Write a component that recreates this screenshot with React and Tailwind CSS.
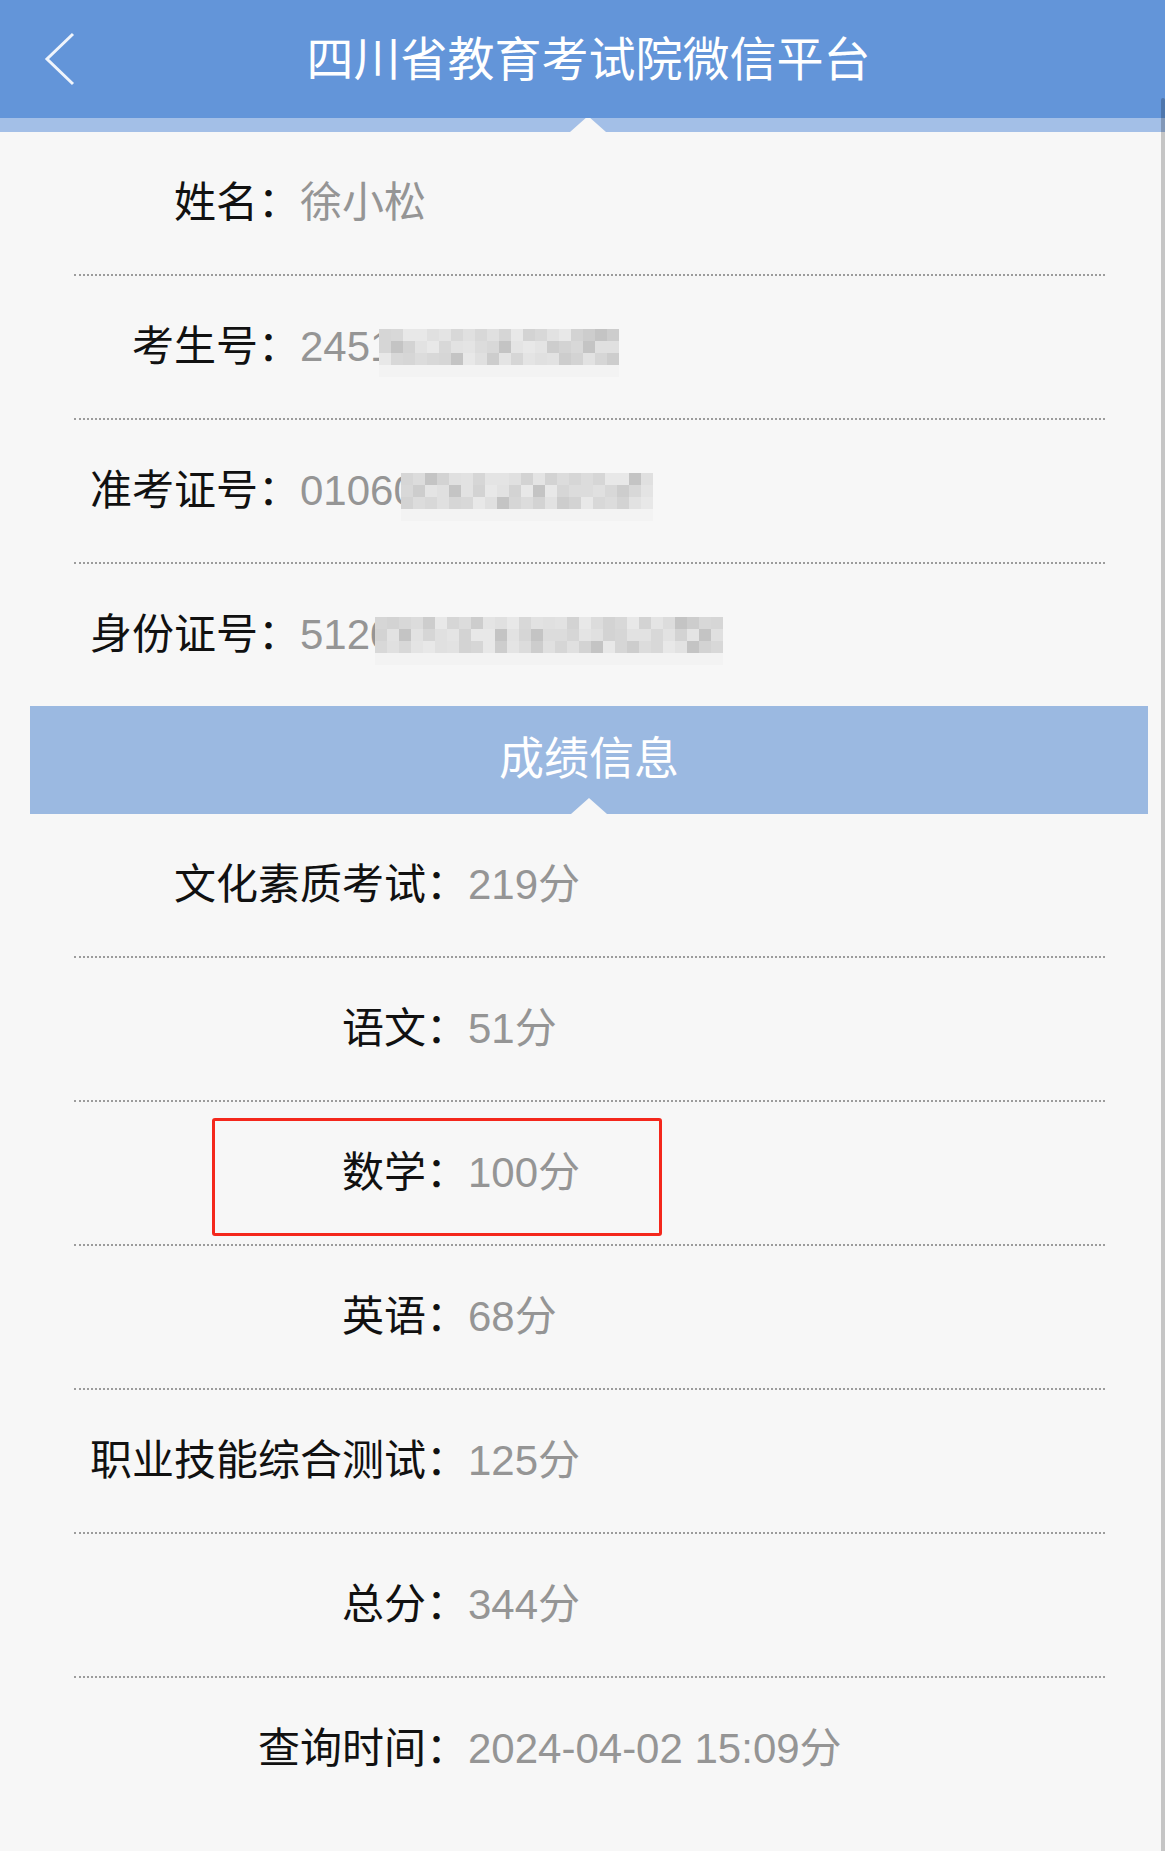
import React from 'react';

const FONT = "font-['Liberation_Sans','Noto_Sans_CJK_SC',sans-serif]";

const GRAYS = ['#cdcdcd', '#d3d3d3', '#d8d8d8', '#dcdcdc', '#e0e0e0', '#e4e4e4', '#e8e8e8', '#c4c4c4', '#d6d6d6', '#e2e2e2'];

const shade = (seed, i) => {
  const n = Math.abs(Math.sin(seed * 97.13 + i * 12.9898) * 43758.5453);
  return GRAYS[Math.floor((n - Math.floor(n)) * GRAYS.length)];
};

// pixelated block covering the hidden digits
const Mosaic = ({ cols, seed, className = '' }) => (
  <div className={`mt-[12px] flex flex-col ${className}`}>
    {[0, 1, 2].map((r) => (
      <div key={r} className="flex">
        {Array.from({ length: cols }).map((_, c) => (
          <div key={c} className="h-[12px] w-[12px]" style={{ backgroundColor: shade(seed, r * cols + c) }} />
        ))}
      </div>
    ))}
    <div className="flex">
      {Array.from({ length: cols }).map((_, c) => (
        <div key={c} className="h-[12px] w-[12px] bg-[#f3f3f3]" />
      ))}
    </div>
  </div>
);

const Divider = () => <div className="ml-[74px] w-[1031px] border-t-2 border-dotted border-[#9c9c9c]" />;

const Row = ({ label, labelWidth, children, line = true, box = false }) => (
  <>
    <div className="relative flex h-[142px] items-center">
      <div className={`shrink-0 text-right text-[#111] ${labelWidth}`}>{label}：</div>
      <div className="flex items-center text-[#959595]">{children}</div>
      {box && (
        <div className="absolute left-[212px] top-[16px] h-[118px] w-[450px] rounded-[3px] border-[3px] border-[#f4271c]" />
      )}
    </div>
    {line && <Divider />}
  </>
);

const Triangle = ({ color }) => (
  <div className={`h-0 w-0 border-x-[18px] border-b-[16px] border-x-transparent ${color}`} />
);

export default function App() {
  const infoW = 'w-[300px]';
  const scoreW = 'w-[468px]';

  return (
    <div className={`relative min-h-[1851px] w-[1165px] bg-[#f7f7f7] text-[42px] leading-none ${FONT}`}>
      <header className="relative flex h-[118px] items-center justify-center bg-[#6395d9] pl-[16px] pr-[4px]">
        <svg className="absolute left-[44px] top-[32px]" width="32" height="54" viewBox="0 0 32 54" fill="none">
          <path d="M29 2 L3 27 L29 52" stroke="#ffffff" strokeOpacity="0.9" strokeWidth="3" strokeLinejoin="miter" />
        </svg>
        <h1 className="text-[47px] font-normal text-white">四川省教育考试院微信平台</h1>
      </header>
      <div className="flex h-[14px] items-end justify-center bg-[#a3bfe7] pl-[14px] pr-[4px]">
        <Triangle color="border-b-[#f7f7f7]" />
      </div>

      <Row label="姓名" labelWidth={infoW}>徐小松</Row>
      <Row label="考生号" labelWidth={infoW}>
        <span>2451</span>
        <Mosaic cols={20} seed={3} className="-ml-[14px]" />
      </Row>
      <Row label="准考证号" labelWidth={infoW}>
        <span>01060</span>
        <Mosaic cols={21} seed={7} className="-ml-[16px]" />
      </Row>
      <Row label="身份证号" labelWidth={infoW} line={false}>
        <span>5120</span>
        <Mosaic cols={29} seed={11} className="-ml-[18px]" />
      </Row>

      <div className="ml-[30px] flex h-[108px] w-[1118px] flex-col items-center justify-end bg-[#9bb9e1]">
        <div className="mb-[16px] text-[45px] text-white">成绩信息</div>
        <Triangle color="border-b-[#f7f7f7]" />
      </div>

      <Row label="文化素质考试" labelWidth={scoreW}>219分</Row>
      <Row label="语文" labelWidth={scoreW}>51分</Row>
      <Row label="数学" labelWidth={scoreW} box>100分</Row>
      <Row label="英语" labelWidth={scoreW}>68分</Row>
      <Row label="职业技能综合测试" labelWidth={scoreW}>125分</Row>
      <Row label="总分" labelWidth={scoreW}>344分</Row>
      <Row label="查询时间" labelWidth={scoreW} line={false}>2024-04-02 15:09分</Row>

      <div className="absolute bottom-0 right-0 top-[98px] w-[4px] rounded-t-[2px] bg-black/20" />
    </div>
  );
}
